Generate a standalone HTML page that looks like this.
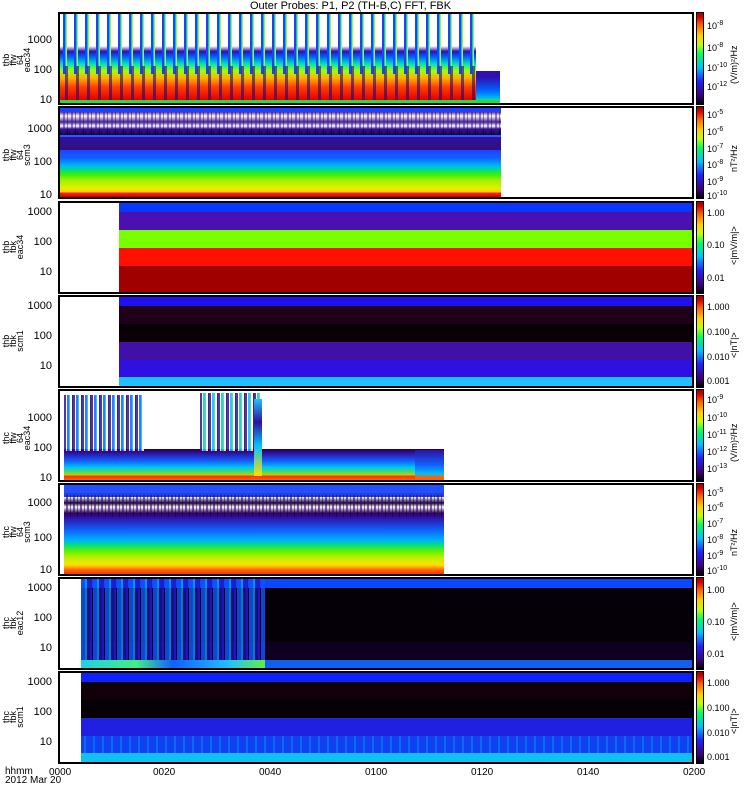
<!DOCTYPE html>
<html><head><meta charset="utf-8"><style>
*{margin:0;padding:0;box-sizing:border-box}
body{width:750px;height:800px;background:#fff;position:relative;overflow:hidden;font-family:"Liberation Sans",sans-serif;font-size:11px;color:#000}
.a{position:absolute}
.p{position:absolute;left:58px;width:636px;border:2px solid #000;overflow:hidden;background:#fff}
.cb{position:absolute;left:696px;width:8px;border:1px solid #000;background:linear-gradient(to top,#000 0%,#400080 10%,#2020ff 25%,#00c0ff 40%,#00ff60 55%,#c0ff00 65%,#ffd000 75%,#ff6000 87%,#e00000 95%,#a00000 100%)}
.yl{position:absolute;width:52px;text-align:right;left:0;font-size:11px;line-height:11px}
.cl{position:absolute;left:707px;font-size:9px;line-height:9px}
.cl sup{font-size:7px;vertical-align:4px;line-height:0}
.un{position:absolute;font-size:9px;transform:rotate(-90deg);transform-origin:left top;white-space:nowrap}
.nm{position:absolute;font-size:9px;line-height:7px;transform:rotate(-90deg);transform-origin:left top;text-align:center;width:50px}
</style></head><body>
<div class="a" style="left:250px;top:0;font-size:11px">Outer Probes: P1, P2 (TH-B,C) FFT, FBK</div>

<!-- Panel 1 -->
<div class="p" style="top:12px;height:93px">
 <div class="a" style="left:0;top:0;width:416px;height:89px;background:linear-gradient(to top,#20e040 0,#20e040 3px,#e00000 3px,#ff4000 18%,#ffb000 28%,#a0ff00 36%,#00e0c0 44%,#0060ff 52%,#3010b0 58%,#fff 64%,#fff 100%)"></div>
 <div class="a" style="left:0;top:0;width:416px;height:60px;background:repeating-linear-gradient(90deg,transparent 0 3px,#2040ff 3px 5px,#00c0ff 5px 6px,#a0ff00 6px 7px,transparent 7px 11px)"></div>
 <div class="a" style="left:0;top:52px;width:416px;height:34px;background:repeating-linear-gradient(90deg,transparent 0 5px,rgba(40,0,120,.6) 5px 8px,transparent 8px 11px)"></div>
 <div class="a" style="left:416px;top:57px;width:24px;height:32px;background:linear-gradient(to top,#20e040 0 4px,#00c0ff 4px,#0060ff 40%,#3010b0 80%)"></div>
</div>
<div class="cb" style="top:12px;height:93px"></div>
<div class="yl" style="top:35px">1000</div><div class="yl" style="top:65px">100</div><div class="yl" style="top:95px">10</div>
<div class="cl" style="top:22px">10<sup>-8</sup></div><div class="cl" style="top:44px">10<sup>-8</sup></div><div class="cl" style="top:64px">10<sup>-10</sup></div><div class="cl" style="top:83px">10<sup>-12</sup></div>
<div class="un" style="left:729px;top:84px">(V/m)²/Hz</div>
<div class="nm" style="left:3px;top:85px">thb<br>ffw<br>64<br>eac34</div>

<!-- Panel 2 -->
<div class="p" style="top:106px;height:93px">
 <div class="a" style="left:0;top:0;width:441px;height:89px;background:linear-gradient(to bottom,#2040ff 0 4px,#5030a0 4px,#fff 8px,#5020a0 14px,#fff 18px,#3010a0 21px,#200030 27px,#2060ff 27px 29px,#3010a0 29px,#301080 42px,#2040ff 42px,#1060ff 50px,#00b0ff 57px,#00e080 62px,#40f000 67px,#a0f000 72px,#e0f000 80px,#ffd000 84px,#ff2000 85px,#d00000 89px)"></div>
 <div class="a" style="left:0;top:4px;width:441px;height:22px;background:repeating-linear-gradient(90deg,transparent 0 3px,rgba(60,20,140,.5) 3px 5px,transparent 5px 7px,rgba(0,0,0,.4) 7px 8px)"></div>
</div>
<div class="cb" style="top:106px;height:93px"></div>
<div class="yl" style="top:124px">1000</div><div class="yl" style="top:157px">100</div><div class="yl" style="top:190px">10</div>
<div class="cl" style="top:111px">10<sup>-5</sup></div><div class="cl" style="top:128px">10<sup>-6</sup></div><div class="cl" style="top:145px">10<sup>-7</sup></div><div class="cl" style="top:161px">10<sup>-8</sup></div><div class="cl" style="top:178px">10<sup>-9</sup></div><div class="cl" style="top:192px">10<sup>-10</sup></div>
<div class="un" style="left:729px;top:172px">nT²/Hz</div>
<div class="nm" style="left:3px;top:180px">thb<br>ffw<br>64<br>scm3</div>

<!-- Panel 3 -->
<div class="p" style="top:201px;height:93px">
 <div class="a" style="left:59px;top:0;width:575px;height:89px;background:linear-gradient(to bottom,#0838ff 0 9px,#4a10b0 9px 27px,#78ff00 27px 45px,#ff1000 45px 63px,#a00000 63px)"></div>
</div>
<div class="cb" style="top:201px;height:93px"></div>
<div class="yl" style="top:207px">1000</div><div class="yl" style="top:237px">100</div><div class="yl" style="top:267px">10</div>
<div class="cl" style="top:209px">1.00</div><div class="cl" style="top:241px">0.10</div><div class="cl" style="top:274px">0.01</div>
<div class="un" style="left:729px;top:265px">&lt;|mV/m|&gt;</div>
<div class="nm" style="left:3px;top:272px">thb<br>fbk<br>eac34</div>

<!-- Panel 4 -->
<div class="p" style="top:295px;height:93px">
 <div class="a" style="left:59px;top:0;width:575px;height:89px;background:linear-gradient(to bottom,#2010f0 0 9px,#200018 9px 27px,#080004 27px 45px,#4010a8 45px 63px,#3010e0 63px 80px,#20c0ff 80px)"></div>
</div>
<div class="cb" style="top:295px;height:93px"></div>
<div class="yl" style="top:301px">1000</div><div class="yl" style="top:331px">100</div><div class="yl" style="top:361px">10</div>
<div class="cl" style="top:303px">1.000</div><div class="cl" style="top:328px">0.100</div><div class="cl" style="top:353px">0.010</div><div class="cl" style="top:377px">0.001</div>
<div class="un" style="left:729px;top:358px">&lt;|nT|&gt;</div>
<div class="nm" style="left:3px;top:366px">thb<br>fbk<br>scm1</div>

<!-- Panel 5 -->
<div class="p" style="top:389px;height:93px">
 <div class="a" style="left:4px;top:0;width:380px;height:89px;background:linear-gradient(to bottom,#fff 0 58px,#200040 58px,#3010a0 62px,#1060ff 70px,#00c0ff 76px,#40e060 81px,#e0c000 84px,#ff3000 85px,#ff6000 89px)"></div>
 <div class="a" style="left:4px;top:4px;width:80px;height:56px;background:repeating-linear-gradient(90deg,#3010a0 0 2px,#fff 2px 3px,#1060ff 3px 5px,#00c0ff 5px 6px,#fff 6px 8px,#200040 8px 9px);opacity:.85"></div>
 <div class="a" style="left:140px;top:2px;width:62px;height:58px;background:repeating-linear-gradient(90deg,#3010a0 0 2px,#fff 2px 3px,#00c0ff 3px 5px,#40e060 5px 6px,#fff 6px 8px,#200040 8px 9px);opacity:.85"></div>
 <div class="a" style="left:194px;top:8px;width:8px;height:77px;background:linear-gradient(to bottom,#20c0ff,#3010a0 30%,#00c0ff 60%,#ffe000)"></div>
 <div class="a" style="left:355px;top:59px;width:29px;height:30px;background:linear-gradient(to bottom,#3010a0,#1060ff 50%,#00c0ff 80%,#ff6000 90%)"></div>
</div>
<div class="cb" style="top:389px;height:93px"></div>
<div class="yl" style="top:413px">1000</div><div class="yl" style="top:443px">100</div><div class="yl" style="top:473px">10</div>
<div class="cl" style="top:396px">10<sup>-9</sup></div><div class="cl" style="top:414px">10<sup>-10</sup></div><div class="cl" style="top:431px">10<sup>-11</sup></div><div class="cl" style="top:448px">10<sup>-12</sup></div><div class="cl" style="top:465px">10<sup>-13</sup></div>
<div class="un" style="left:729px;top:462px">(V/m)²/Hz</div>
<div class="nm" style="left:3px;top:463px">thc<br>ffw<br>64<br>eac34</div>

<!-- Panel 6 -->
<div class="p" style="top:483px;height:93px">
 <div class="a" style="left:4px;top:0;width:380px;height:89px;background:linear-gradient(to bottom,#2050ff 0 8px,#2040e0 8px 12px,#fff 12px,#200040 18px,#fff 22px,#300060 28px,#3010a0 32px,#1060ff 45px,#00b0ff 55px,#00e080 60px,#60f000 66px,#c0f000 73px,#ffe000 80px,#ff6000 85px,#ff3000 89px)"></div>
 <div class="a" style="left:4px;top:10px;width:380px;height:22px;background:repeating-linear-gradient(90deg,transparent 0 2px,rgba(50,10,110,.6) 2px 4px,transparent 4px 6px,rgba(0,0,0,.45) 6px 7px)"></div>
</div>
<div class="cb" style="top:483px;height:93px"></div>
<div class="yl" style="top:498px">1000</div><div class="yl" style="top:533px">100</div><div class="yl" style="top:565px">10</div>
<div class="cl" style="top:489px">10<sup>-5</sup></div><div class="cl" style="top:504px">10<sup>-6</sup></div><div class="cl" style="top:520px">10<sup>-7</sup></div><div class="cl" style="top:536px">10<sup>-8</sup></div><div class="cl" style="top:552px">10<sup>-9</sup></div><div class="cl" style="top:567px">10<sup>-10</sup></div>
<div class="un" style="left:729px;top:556px">nT²/Hz</div>
<div class="nm" style="left:3px;top:557px">thc<br>ffw<br>64<br>scm3</div>

<!-- Panel 7 -->
<div class="p" style="top:577px;height:93px">
 <div class="a" style="left:21px;top:0;width:613px;height:89px;background:linear-gradient(to bottom,#0848ff 0 9px,#050008 9px 63px,#100020 63px 81px,#1060f0 81px)"></div>
 <div class="a" style="left:21px;top:0;width:184px;height:89px;background:repeating-linear-gradient(90deg,rgba(16,80,255,.85) 0 4px,rgba(0,180,255,.7) 4px 6px,rgba(30,20,180,.7) 6px 9px,rgba(40,20,200,.9) 9px 11px,transparent 11px 12px)"></div>
 <div class="a" style="left:21px;top:81px;width:184px;height:8px;background:linear-gradient(90deg,#20d0e0,#40f080 30%,#1060ff 50%,#20c0ff 80%,#60f040)"></div>
</div>
<div class="cb" style="top:577px;height:93px"></div>
<div class="yl" style="top:583px">1000</div><div class="yl" style="top:613px">100</div><div class="yl" style="top:643px">10</div>
<div class="cl" style="top:586px">1.00</div><div class="cl" style="top:618px">0.10</div><div class="cl" style="top:650px">0.01</div>
<div class="un" style="left:729px;top:641px">&lt;|mV/m|&gt;</div>
<div class="nm" style="left:3px;top:648px">thc<br>fbk<br>eac12</div>

<!-- Panel 8 -->
<div class="p" style="top:671px;height:93px">
 <div class="a" style="left:21px;top:0;width:613px;height:89px;background:linear-gradient(to bottom,#1020ff 0 9px,#100008 9px 27px,#050004 27px 45px,#2020e0 45px 63px,#1040f0 63px 80px,#10c0f0 80px)"></div>
 <div class="a" style="left:21px;top:63px;width:613px;height:17px;background:repeating-linear-gradient(90deg,transparent 0 3px,rgba(0,170,255,.4) 3px 5px,transparent 5px 9px)"></div>
</div>
<div class="cb" style="top:671px;height:93px"></div>
<div class="yl" style="top:677px">1000</div><div class="yl" style="top:707px">100</div><div class="yl" style="top:737px">10</div>
<div class="cl" style="top:679px">1.000</div><div class="cl" style="top:704px">0.100</div><div class="cl" style="top:729px">0.010</div><div class="cl" style="top:753px">0.001</div>
<div class="un" style="left:729px;top:734px">&lt;|nT|&gt;</div>
<div class="nm" style="left:3px;top:742px">thc<br>fbk<br>scm1</div>

<!-- time axis -->
<div class="a" style="left:5px;top:767px;font-size:10px;line-height:9px">hhmm<br>2012 Mar 20</div>
<div class="a" style="left:49px;top:767px;font-size:10px">0000</div>
<div class="a" style="left:153px;top:767px;font-size:10px">0020</div>
<div class="a" style="left:259px;top:767px;font-size:10px">0040</div>
<div class="a" style="left:365px;top:767px;font-size:10px">0100</div>
<div class="a" style="left:471px;top:767px;font-size:10px">0120</div>
<div class="a" style="left:577px;top:767px;font-size:10px">0140</div>
<div class="a" style="left:683px;top:767px;font-size:10px">0200</div>
</body></html>
